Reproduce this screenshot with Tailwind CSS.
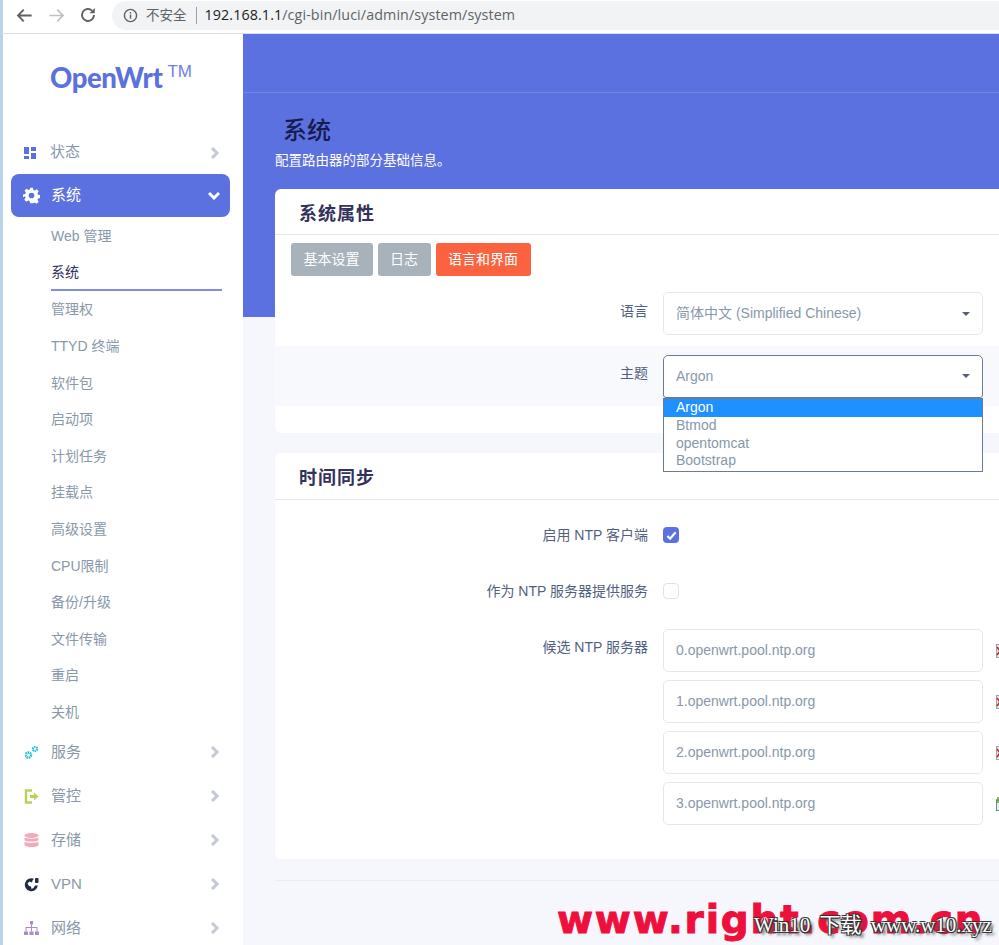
<!doctype html>
<html lang="zh">
<head>
<meta charset="utf-8">
<title>系统</title>
<script src="https://cdn.jsdelivr.net/npm/@tailwindcss/browser@4"></script>
</head>
<body class="bg-white">
<div class="relative w-[999px] h-[945px] overflow-hidden flex flex-col font-['Liberation_Sans','Noto_Sans_CJK_SC',sans-serif]">
  <!-- browser bar -->
  <div class="h-[34px] shrink-0 flex items-center pb-[3px] bg-white border-b border-[#dcdee2] border-l-[3px] border-l-[#b9d3ea]">
    <div class="w-[109px] pl-[12px] flex items-center gap-[13px] shrink-0">
      <svg class="w-[19px] h-[19px]" viewBox="0 0 24 24" fill="none" stroke="#5f6368" stroke-width="2.4"><path d="M21 12H4M11 4.500L3.800 12l7.200 7.500"/></svg>
      <svg class="w-[19px] h-[19px]" viewBox="0 0 24 24" fill="none" stroke="#bdc1c6" stroke-width="2.200"><path d="M3 12h17M13 4.500l7.200 7.500-7.200 7.500"/></svg>
      <svg class="w-[18px] h-[18px]" viewBox="0 0 24 24" fill="none" stroke="#5f6368" stroke-width="2.600"><path d="M20 12a8 8 0 1 1-2.500-5.800"/><path d="M21 2.500v7h-7z" fill="#5f6368" stroke="none"/></svg>
    </div>
    <div class="flex-1 h-[29px] rounded-l-full bg-[#f1f3f4] flex items-center pl-[11px] text-[#5f6368] text-[14px] font-['Open_Sans','Noto_Sans_CJK_SC',sans-serif]">
      <svg class="w-[15px] h-[15px] shrink-0" viewBox="0 0 16 16" fill="none" stroke="#5f6368" stroke-width="1.500"><circle cx="8" cy="8" r="6.500"/><path d="M8 7v4.500M8 4.200v1.600"/></svg>
      <span class="ml-[8px] text-[13.500px] text-[#5f6368]">不安全</span>
      <span class="w-px h-[17px] bg-[#9aa0a6] ml-[9px] mr-[8px]"></span>
      <span class="text-[14.300px] tracking-[0.1px] whitespace-nowrap"><span class="text-[#202124]">192.168.1.1</span>/cgi-bin/luci/admin/system/system</span>
    </div>
  </div>

  <div class="flex-1 flex min-h-0">
    <!-- left desktop strip -->
    <div class="w-[3px] shrink-0 bg-[#b9d3ea]"></div>

    <!-- sidebar -->
    <aside class="w-[240px] shrink-0 bg-white flex flex-col text-[#8898aa]">
      <div class="h-[97px] shrink-0 pl-[47px] pt-[24px] flex items-start text-[#5c71e0]">
        <span class="text-[27.500px] leading-[40px] font-black tracking-[-0.4px] font-['Lato',sans-serif]">OpenWrt</span>
        <span class="ml-[5px] mt-[2px] text-[17px] leading-[24px] text-[#6f81e6]">TM</span>
      </div>

      <nav class="flex flex-col pl-[8px] pr-[13px]">
        <a class="h-[43px] flex items-center pl-[12px] pr-[10px] text-[15px]">
          <svg class="w-[14px] h-[14px]" viewBox="0 0 14 14" fill="#5c71e0"><path d="M1 1h5v7H1zM8 1h5v4H8zM8 7h5v6H8zM1 10h5v3H1z"/></svg>
          <span class="ml-[13px] flex-1">状态</span>
          <svg class="w-[10px] h-[12px]" viewBox="0 0 10 12" fill="none" stroke="#c3cad3" stroke-width="3"><path d="M2 1l5 5-5 5"/></svg>
        </a>
        <a class="h-[43px] flex items-center pl-[12px] pr-[10px] text-[15px] text-white bg-[#5c71e0] rounded-[8px]">
          <svg class="w-[17px] h-[17px]" viewBox="0 0 24 24" fill="#fff"><path fill-rule="evenodd" d="M10 1h4l.6 3.200 2 .9L19.400 3.300l2.800 2.800-1.800 2.800.9 2 3.100.6v4l-3.100.6-.9 2 1.800 2.800-2.800 2.800-2.800-1.800-2 .9L14 23h-4l-.6-3.200-2-.9-2.800 1.800-2.800-2.800 1.800-2.800-.9-2L0 14.500v-4l3.100-.6.900-2-1.800-2.800L5 2.300l2.800 1.800 2-.9zM12 8a4 4 0 1 0 0 8 4 4 0 0 0 0-8z"/></svg>
          <span class="ml-[11px] flex-1">系统</span>
          <svg class="w-[12px] h-[10px]" viewBox="0 0 12 10" fill="none" stroke="#fff" stroke-width="3"><path d="M1 2l5 5 5-5"/></svg>
        </a>
        <ul class="pl-[40px] pr-[8px] pt-[1px] text-[14px] text-[#8898aa] flex flex-col">
          <li class="h-[36.600px] flex items-center">Web 管理</li>
          <li class="h-[36.600px] flex items-center pt-[2px] text-[#32325d] border-b-2 border-[#5c71e0]/80">系统</li>
          <li class="h-[36.600px] flex items-center pt-[1px]">管理权</li>
          <li class="h-[36.600px] flex items-center">TTYD 终端</li>
          <li class="h-[36.600px] flex items-center pt-[1px]">软件包</li>
          <li class="h-[36.600px] flex items-center">启动项</li>
          <li class="h-[36.600px] flex items-center pt-[1px]">计划任务</li>
          <li class="h-[36.600px] flex items-center pt-[1px]">挂载点</li>
          <li class="h-[36.600px] flex items-center">高级设置</li>
          <li class="h-[36.600px] flex items-center pt-[1px]">CPU限制</li>
          <li class="h-[36.600px] flex items-center">备份/升级</li>
          <li class="h-[36.600px] flex items-center pt-[1px]">文件传输</li>
          <li class="h-[36.600px] flex items-center pt-[1px]">重启</li>
          <li class="h-[36.600px] flex items-center">关机</li>
        </ul>
        <a class="h-[44px] flex items-center pl-[13px] pr-[10px] text-[15px]">
          <svg class="w-[15px] h-[15px]" viewBox="0 0 15 15" fill="none"><circle cx="4.500" cy="10" r="2.600" stroke="#2bbfd8" stroke-width="2.400" stroke-dasharray="1.600 .6"/><circle cx="11" cy="4" r="2.200" stroke="#2bbfd8" stroke-width="2" stroke-dasharray="1.500 .6"/></svg>
          <span class="ml-[12px] flex-1">服务</span>
          <svg class="w-[10px] h-[12px]" viewBox="0 0 10 12" fill="none" stroke="#c3cad3" stroke-width="3"><path d="M2 1l5 5-5 5"/></svg>
        </a>
        <a class="h-[44px] flex items-center pl-[13px] pr-[10px] text-[15px]">
          <svg class="w-[15px] h-[15px]" viewBox="0 0 15 15" fill="none"><path d="M8 1.500H2v12h6" stroke="#b5d35a" stroke-width="2.400"/><path d="M6 6h4V3.500L14.500 7.500 10 11.500V9H6z" fill="#b5d35a"/></svg>
          <span class="ml-[12px] flex-1">管控</span>
          <svg class="w-[10px] h-[12px]" viewBox="0 0 10 12" fill="none" stroke="#c3cad3" stroke-width="3"><path d="M2 1l5 5-5 5"/></svg>
        </a>
        <a class="h-[44px] flex items-center pl-[13px] pr-[10px] text-[15px]">
          <svg class="w-[15px] h-[15px]" viewBox="0 0 15 15" fill="#f3a8bb"><ellipse cx="7.500" cy="2.500" rx="7" ry="2.500"/><path d="M.5 4.500c1.500 1.500 12.500 1.500 14 0V7c-1 2-13 2-14 0zM.5 8.800c1.500 1.500 12.500 1.500 14 0v3.400c-1 2.400-13 2.400-14 0z"/></svg>
          <span class="ml-[12px] flex-1">存储</span>
          <svg class="w-[10px] h-[12px]" viewBox="0 0 10 12" fill="none" stroke="#c3cad3" stroke-width="3"><path d="M2 1l5 5-5 5"/></svg>
        </a>
        <a class="h-[44px] flex items-center pl-[13px] pr-[10px] text-[15px]">
          <svg class="w-[15px] h-[15px]" viewBox="0 0 15 15" fill="#1f2a44"><path d="M10 1.800A6.500 6.500 0 1 0 13.800 8.500H11L9.500 11 7.500 12 7 9.500 5 9 3.500 6.500l2-2 2.500 1L8.500 3.500z"/><rect x="11" y="1" width="3.500" height="5" rx="1"/></svg>
          <span class="ml-[12px] flex-1">VPN</span>
          <svg class="w-[10px] h-[12px]" viewBox="0 0 10 12" fill="none" stroke="#c3cad3" stroke-width="3"><path d="M2 1l5 5-5 5"/></svg>
        </a>
        <a class="h-[44px] flex items-center pl-[13px] pr-[10px] text-[15px]">
          <svg class="w-[15px] h-[15px]" viewBox="0 0 15 15" fill="#a78cc9"><path d="M6 0h3v3.500H6zM0 10.500h4V14H0zM5.500 10.500h4V14h-4zM11 10.500h4V14h-4z"/><path d="M7 3.500h1V6h5.500v4.500h-1V7H8v3.500H7V7H2.500v3.500h-1V6H7z"/></svg>
          <span class="ml-[12px] flex-1">网络</span>
          <svg class="w-[10px] h-[12px]" viewBox="0 0 10 12" fill="none" stroke="#c3cad3" stroke-width="3"><path d="M2 1l5 5-5 5"/></svg>
        </a>
      </nav>
    </aside>

    <!-- main -->
    <main class="relative flex-1 min-w-0 bg-[#f6f7fc] overflow-hidden">
      <div class="absolute inset-x-0 top-0 h-[283px] bg-[#5c71e0]"></div>
      <div class="relative">
        <div class="h-[59px] border-b border-white/15"></div>
        <div class="pl-[32px]">
          <h2 class="pl-[8px] pt-[21px] h-[55px] text-[24px] leading-[34px] text-[#171c50] font-medium">系统</h2>
          <p class="h-[41px] pt-[4px] text-[13.500px] leading-[18px] text-white">配置路由器的部分基础信息。</p>

          <!-- card 1 -->
          <section class="w-[740px] h-[244px] bg-white rounded-l-[6px] flex flex-col">
            <h3 class="h-[46px] shrink-0 pl-[24px] text-[18px] leading-[50px] font-bold tracking-[1px] text-[#32325d] border-b border-[#e4e7ec]">系统属性</h3>
            <div class="flex gap-[5px] pl-[16px] pt-[8px] text-[14px] text-white">
              <span class="w-[82px] h-[33px] pr-[1px] rounded-[3px] bg-[#a8b2bb] flex items-center justify-center">基本设置</span>
              <span class="w-[53px] h-[33px] pr-[1px] rounded-[3px] bg-[#a8b2bb] flex items-center justify-center">日志</span>
              <span class="w-[95px] h-[33px] pr-[1px] rounded-[3px] bg-[#fb6340] flex items-center justify-center">语言和界面</span>
            </div>
            <div class="flex items-center h-[70px] text-[14px]">
              <label class="w-[373px] text-right text-[#525f7f]">语言</label>
              <div class="ml-[15px] w-[320px] h-[43px] mt-[5px] rounded-[5px] border border-[#e4e7ec] bg-white flex items-center px-[12px] text-[#8898aa]">
                <span class="flex-1">简体中文 (Simplified Chinese)</span>
                <span class="w-0 h-0 border-x-[4px] border-x-transparent border-t-[4px] border-t-[#525f7f]"></span>
              </div>
            </div>
            <div class="relative flex items-center h-[60px] text-[14px] bg-[#f8f9fd]">
              <label class="w-[373px] text-right text-[#525f7f] mt-[-5px]">主题</label>
              <div class="ml-[15px] w-[320px] h-[43px] rounded-t-[5px] rounded-b-[3px] border border-[#6b7a99] bg-white flex items-center px-[12px] text-[#8898aa]">
                <span class="flex-1">Argon</span>
                <span class="w-0 h-0 border-x-[4px] border-x-transparent border-t-[4px] border-t-[#525f7f]"></span>
              </div>
              <ul class="absolute z-10 left-[388px] top-[52px] w-[320px] h-[74px] border border-[#6b7a99] bg-white text-[#8898aa] text-[14px]">
                <li class="pl-[12px] h-[18px] leading-[16px] bg-[#1e90ff] text-white">Argon</li>
                <li class="pl-[12px] h-[18px] leading-[16px]">Btmod</li>
                <li class="pl-[12px] h-[18px] leading-[16px]">opentomcat</li>
                <li class="pl-[12px] h-[17px] leading-[14px]">Bootstrap</li>
              </ul>
            </div>
          </section>

          <!-- card 2 -->
          <section class="mt-[20px] w-[740px] h-[406px] bg-white rounded-l-[6px] flex flex-col text-[14px]">
            <h3 class="h-[47px] shrink-0 pl-[24px] text-[18px] leading-[50px] font-bold tracking-[1px] text-[#32325d] border-b border-[#e4e7ec]">时间同步</h3>
            <div class="h-[70px] flex items-center">
              <label class="w-[373px] text-right text-[#525f7f]">启用 NTP 客户端</label>
              <span class="ml-[15px] w-[16px] h-[16px] rounded-[4px] bg-[#5c71e0] flex items-center justify-center">
                <svg class="w-[11px] h-[11px]" viewBox="0 0 12 12" fill="none" stroke="#fff" stroke-width="2.400"><path d="M1.500 6.500l3 3 6-7"/></svg>
              </span>
            </div>
            <div class="h-[42px] flex items-center">
              <label class="w-[373px] text-right text-[#525f7f]">作为 NTP 服务器提供服务</label>
              <span class="ml-[15px] w-[16px] h-[16px] rounded-[4px] bg-white border border-[#dfe3e9]"></span>
            </div>
            <div class="flex pt-[17px]">
              <label class="w-[373px] text-right text-[#525f7f] pt-[8px]">候选 NTP 服务器</label>
              <div class="ml-[15px] flex flex-col gap-[8px] text-[#8898aa]">
                <div class="flex items-center gap-[13px]"><div class="w-[320px] h-[43px] rounded-[5px] border border-[#e4e7ec] flex items-center px-[12px]">0.openwrt.pool.ntp.org</div>
                  <svg class="w-[3px] h-[14px] shrink-0" viewBox="0 0 3 14"><rect x=".5" y=".5" width="12" height="13" fill="#f3e4e4" stroke="#9aa3ad"/><path d="M1 3l6 8M7 3l-6 8" stroke="#a8343c" stroke-width="1.600"/></svg></div>
                <div class="flex items-center gap-[13px]"><div class="w-[320px] h-[43px] rounded-[5px] border border-[#e4e7ec] flex items-center px-[12px]">1.openwrt.pool.ntp.org</div>
                  <svg class="w-[3px] h-[14px] shrink-0" viewBox="0 0 3 14"><rect x=".5" y=".5" width="12" height="13" fill="#f3e4e4" stroke="#9aa3ad"/><path d="M1 3l6 8M7 3l-6 8" stroke="#a8343c" stroke-width="1.600"/></svg></div>
                <div class="flex items-center gap-[13px]"><div class="w-[320px] h-[43px] rounded-[5px] border border-[#e4e7ec] flex items-center px-[12px]">2.openwrt.pool.ntp.org</div>
                  <svg class="w-[3px] h-[14px] shrink-0" viewBox="0 0 3 14"><rect x=".5" y=".5" width="12" height="13" fill="#f3e4e4" stroke="#9aa3ad"/><path d="M1 3l6 8M7 3l-6 8" stroke="#a8343c" stroke-width="1.600"/></svg></div>
                <div class="flex items-center gap-[13px]"><div class="w-[320px] h-[43px] rounded-[5px] border border-[#e4e7ec] flex items-center px-[12px]">3.openwrt.pool.ntp.org</div>
                  <svg class="w-[3px] h-[14px] shrink-0" viewBox="0 0 3 14"><rect x=".5" y="3.500" width="12" height="10" fill="#e8f0ee" stroke="#5f8fa0"/><path d="M2 0v6M-1 3h6" stroke="#6ea03c" stroke-width="1.600"/></svg></div>
              </div>
            </div>
          </section>
          <div class="mt-[21px] border-t border-[#e9ebf2]"></div>
        </div>
      </div>
    </main>
  </div>

  <!-- watermarks -->
  <div class="absolute left-[557px] top-[894px] text-[#ee0f3c] text-[39px] leading-[52px] font-black tracking-[1.800px] whitespace-nowrap font-['DejaVu_Sans',sans-serif] [-webkit-text-stroke:1px_#ee0f3c]">www.right.com.cn</div>
  <div class="absolute left-[754px] top-[910px] text-white text-[21px] leading-[30px] [word-spacing:4px] whitespace-nowrap font-['Liberation_Serif','Noto_Sans_CJK_SC',serif] [text-shadow:1px_1px_0_#333,-1px_-1px_0_#333,1px_-1px_0_#333,-1px_1px_0_#333,3px_3px_3px_#555]">Win10 下载 www.w10.xyz</div>
</div>
</body>
</html>
